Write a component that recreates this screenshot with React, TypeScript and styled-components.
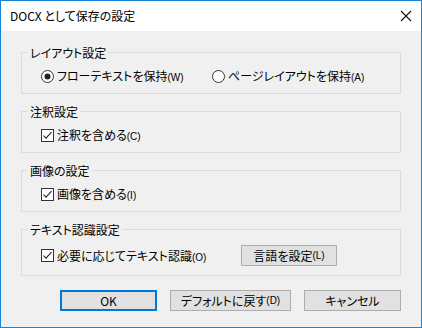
import React from "react"
import styled, { createGlobalStyle } from "styled-components"

const GlobalStyle = createGlobalStyle`
  html, body {
    margin: 0;
    padding: 0;
    background: #f0f0f0;
  }
  * {
    box-sizing: border-box;
  }
`

const font = `"Noto Sans CJK JP", "Noto Sans", sans-serif`

const CheckBox = () => (
  <Box>
    <svg width="11" height="11" viewBox="0 0 11 11">
      <path d="M1.5 5.5 L4 8.2 L9.5 2.2" fill="none" stroke="#222" strokeWidth="1.1" />
    </svg>
  </Box>
)

const Radio = ({ checked }: { checked?: boolean }) => (
  <svg width="13" height="13" viewBox="0 0 13 13">
    <circle cx="6.5" cy="6.5" r="6" fill="#fff" stroke="#333" strokeWidth="1" />
    {checked && <circle cx="6.5" cy="6.5" r="3" fill="#222" />}
  </svg>
)

const App = () => {
  return (
    <Window>
      <GlobalStyle />
      <TitleBar>
        <Title>DOCX として保存の設定</Title>
        <Close>
          <svg width="12" height="12" viewBox="0 0 12 12">
            <path d="M1 1 L11 11 M11 1 L1 11" stroke="#111" strokeWidth="1.1" />
          </svg>
        </Close>
      </TitleBar>

      <Content>
        <Group>
          <Legend>レイアウト設定</Legend>
          <Row>
            <Option width={171}>
              <Radio checked />
              <Label>フローテキストを保持<Key>(W)</Key></Label>
            </Option>
            <Option>
              <Radio />
              <Label>ページレイアウトを保持<Key>(A)</Key></Label>
            </Option>
          </Row>
        </Group>

        <Group>
          <Legend>注釈設定</Legend>
          <Row>
            <Option>
              <CheckBox />
              <Label>注釈を含める<Key>(C)</Key></Label>
            </Option>
          </Row>
        </Group>

        <Group>
          <Legend>画像の設定</Legend>
          <Row>
            <Option>
              <CheckBox />
              <Label>画像を含める<Key>(I)</Key></Label>
            </Option>
          </Row>
        </Group>

        <Group>
          <Legend>テキスト認識設定</Legend>
          <Row height={21}>
            <Option width={200}>
              <CheckBox />
              <Label>必要に応じてテキスト認識<Key>(O)</Key></Label>
            </Option>
            <Button width={96}>言語を設定<Key>(L)</Key></Button>
          </Row>
        </Group>

        <Buttons>
          <Button width={97} primary>OK</Button>
          <Button width={121}>デフォルトに戻す<Key>(D)</Key></Button>
          <Button width={97}>キャンセル</Button>
        </Buttons>
      </Content>
    </Window>
  )
}
export default App

const Window = styled.div`
  width: 422px;
  height: 328px;
  border: 1px solid #1883d7;
  background: #f0f0f0;
  display: flex;
  flex-direction: column;
  font-family: ${font};
  font-feature-settings: "palt";
  color: #000;
`

const TitleBar = styled.div`
  height: 30px;
  flex-shrink: 0;
  background: #fff;
  display: flex;
  align-items: center;
  justify-content: space-between;
  padding: 0 9px 0 9px;
`

const Title = styled.div`
  font-size: 12px;
  line-height: 16px;
`

const Close = styled.div`
  width: 12px;
  height: 12px;
  display: flex;
`

const Content = styled.div`
  flex: 1;
  display: flex;
  flex-direction: column;
  gap: 10px;
  padding: 14px 20px 0 20px;
`

const Group = styled.fieldset`
  margin: 0;
  min-width: 0;
  border: 1px solid #dcdcdc;
  padding: 8px 0 9px 6px;
`

const Legend = styled.legend`
  font-size: 12px;
  line-height: 15px;
  height: 15px;
  padding: 0 2px;
  margin: 0;
`

const Row = styled.div<{ height?: number }>`
  display: flex;
  align-items: center;
  height: ${(p) => p.height ?? 16}px;
  padding-left: 13px;
`

const Option = styled.div<{ width?: number }>`
  display: flex;
  align-items: center;
  gap: 3px;
  width: ${(p) => (p.width ? `${p.width}px` : "auto")};
  flex-shrink: 0;
`

const Box = styled.span`
  width: 13px;
  height: 13px;
  border: 1px solid #333;
  background: #fff;
  display: flex;
  align-items: center;
  justify-content: center;
`

const Label = styled.span`
  font-size: 12px;
  line-height: 16px;
  height: 16px;
  white-space: nowrap;
`

const Key = styled.span`
  font-size: 10px;
  line-height: 10px;
  font-family: "Liberation Sans", "Noto Sans", sans-serif;
`

const Buttons = styled.div`
  display: flex;
  justify-content: flex-end;
  gap: 13px;
  margin-top: 4px;
`

const Button = styled.button<{ width: number; primary?: boolean }>`
  width: ${(p) => p.width}px;
  height: 21px;
  padding: 0;
  background: #e1e1e1;
  border: ${(p) => (p.primary ? "2px solid #0078d7" : "1px solid #adadad")};
  font-family: ${font};
  font-feature-settings: "palt";
  font-size: 12px;
  line-height: 16px;
  color: #000;
  display: flex;
  align-items: center;
  justify-content: center;
  white-space: nowrap;
`
